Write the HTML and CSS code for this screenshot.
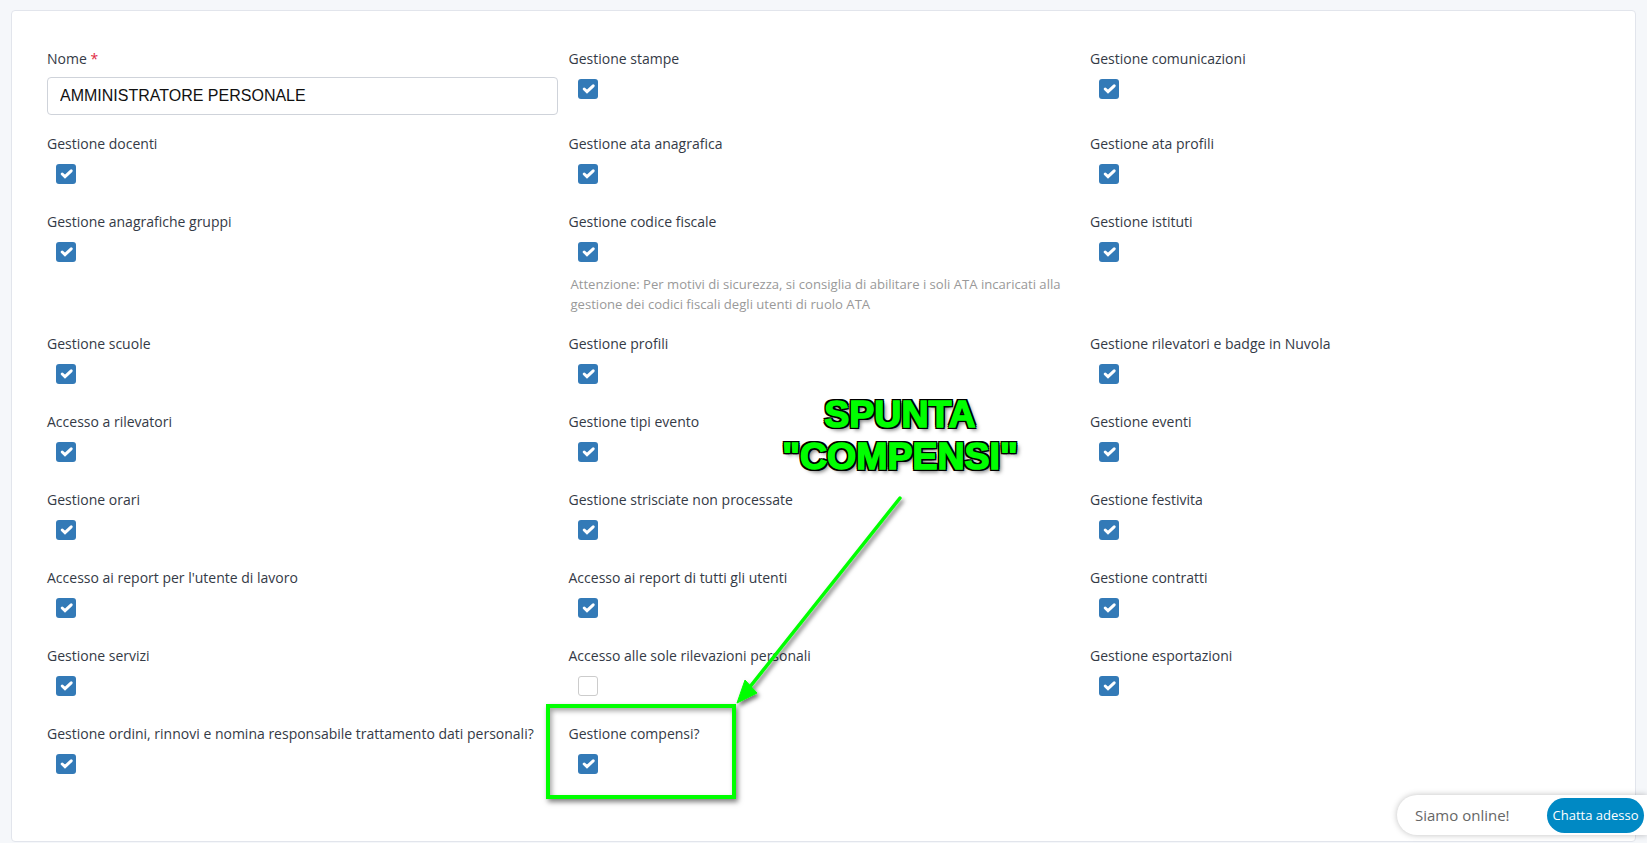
FILE: index.html
```html
<!DOCTYPE html>
<html lang="it">
<head>
  <meta charset="UTF-8" />
  <title>Profilo - Amministratore personale</title>
  <link rel="stylesheet" href="styles.css">
</head>
<body>
  <svg width="0" height="0" class="defs">
    <symbol id="tick" viewBox="0 0 20 20">
      <path d="M6.2 10 9 12.6 15.2 6.8" fill="none" stroke="#fff" stroke-width="3" stroke-linecap="round" />
    </symbol>
  </svg>

  <main class="card">
    <form class="grid">
      <div class="field">
        <label class="label">Nome <span class="req">*</span></label>
        <input class="input" type="text" value="AMMINISTRATORE PERSONALE">
      </div>
      <div class="field"><label class="label">Gestione stampe</label><span class="check on"><svg><use href="#tick"/></svg></span></div>
      <div class="field"><label class="label">Gestione comunicazioni</label><span class="check on"><svg><use href="#tick"/></svg></span></div>

      <div class="field"><label class="label">Gestione docenti</label><span class="check on"><svg><use href="#tick"/></svg></span></div>
      <div class="field"><label class="label">Gestione ata anagrafica</label><span class="check on"><svg><use href="#tick"/></svg></span></div>
      <div class="field"><label class="label">Gestione ata profili</label><span class="check on"><svg><use href="#tick"/></svg></span></div>

      <div class="field"><label class="label">Gestione anagrafiche gruppi</label><span class="check on"><svg><use href="#tick"/></svg></span></div>
      <div class="field">
        <label class="label">Gestione codice fiscale</label><span class="check on"><svg><use href="#tick"/></svg></span>
        <p class="hint">Attenzione: Per motivi di sicurezza, si consiglia di abilitare i soli ATA incaricati alla gestione dei codici fiscali degli utenti di ruolo ATA</p>
      </div>
      <div class="field"><label class="label">Gestione istituti</label><span class="check on"><svg><use href="#tick"/></svg></span></div>

      <div class="field"><label class="label">Gestione scuole</label><span class="check on"><svg><use href="#tick"/></svg></span></div>
      <div class="field"><label class="label">Gestione profili</label><span class="check on"><svg><use href="#tick"/></svg></span></div>
      <div class="field"><label class="label">Gestione rilevatori e badge in Nuvola</label><span class="check on"><svg><use href="#tick"/></svg></span></div>

      <div class="field"><label class="label">Accesso a rilevatori</label><span class="check on"><svg><use href="#tick"/></svg></span></div>
      <div class="field"><label class="label">Gestione tipi evento</label><span class="check on"><svg><use href="#tick"/></svg></span></div>
      <div class="field"><label class="label">Gestione eventi</label><span class="check on"><svg><use href="#tick"/></svg></span></div>

      <div class="field"><label class="label">Gestione orari</label><span class="check on"><svg><use href="#tick"/></svg></span></div>
      <div class="field"><label class="label">Gestione strisciate non processate</label><span class="check on"><svg><use href="#tick"/></svg></span></div>
      <div class="field"><label class="label">Gestione festivita</label><span class="check on"><svg><use href="#tick"/></svg></span></div>

      <div class="field"><label class="label">Accesso ai report per l'utente di lavoro</label><span class="check on"><svg><use href="#tick"/></svg></span></div>
      <div class="field"><label class="label">Accesso ai report di tutti gli utenti</label><span class="check on"><svg><use href="#tick"/></svg></span></div>
      <div class="field"><label class="label">Gestione contratti</label><span class="check on"><svg><use href="#tick"/></svg></span></div>

      <div class="field"><label class="label">Gestione servizi</label><span class="check on"><svg><use href="#tick"/></svg></span></div>
      <div class="field"><label class="label">Accesso alle sole rilevazioni personali</label><span class="check"></span></div>
      <div class="field"><label class="label">Gestione esportazioni</label><span class="check on"><svg><use href="#tick"/></svg></span></div>

      <div class="field"><label class="label">Gestione ordini, rinnovi e nomina responsabile trattamento dati personali?</label><span class="check on"><svg><use href="#tick"/></svg></span></div>
      <div class="field"><label class="label">Gestione compensi?</label><span class="check on"><svg><use href="#tick"/></svg></span></div>
    </form>
  </main>

  <!-- screenshot annotation drawn over the form -->
  <div class="note">SPUNTA<br>"COMPENSI"</div>
  <div class="note-box"></div>
  <svg class="note-arrow" width="1647" height="843" viewBox="0 0 1647 843">
    <defs>
      <filter id="soft" x="-20%" y="-20%" width="140%" height="140%">
        <feDropShadow dx="2" dy="3" stdDeviation="2" flood-color="#000" flood-opacity="0.55" />
      </filter>
    </defs>
    <g filter="url(#soft)">
      <path d="M900 498 749 688" stroke="#00ff00" stroke-width="3.5" stroke-linecap="round" fill="none" />
      <path d="M737 703 745 680 757 693Z" fill="#00ff00" stroke="#00ff00" stroke-width="1" />
    </g>
  </svg>

  <div class="chat">
    <span class="chat-text">Siamo online!</span>
    <button class="chat-btn" type="button">Chatta adesso</button>
  </div>
</body>
</html>
```

FILE: styles.css
```css
html, body {
  margin: 0;
  height: 100%;
}

body {
  background-color: #f5f7fa;
  font-family: "Open Sans", sans-serif;
  font-size: 14px;
  color: #343a46;
  padding: 10px 11px 0;
  box-sizing: border-box;
  overflow: hidden;
}

.defs {
  position: absolute;
}

.card {
  height: 832px;
  box-sizing: border-box;
  background-color: #fff;
  border: 1px solid #e2e5ec;
  border-radius: 4px;
  padding: 37px 34px 0 35px;
}

.grid {
  display: grid;
  grid-template-columns: repeat(3, 1fr);
  column-gap: 10.5px;
  row-gap: 18px;
  align-items: start;
}

.label {
  display: block;
  height: 21px;
  line-height: 21px;
  margin-bottom: 8px;
  white-space: nowrap;
}

.req {
  color: #e0293e;
}

.input {
  display: block;
  width: 100%;
  height: 38px;
  box-sizing: border-box;
  padding: 0 12px;
  border: 1px solid #cfd3da;
  border-radius: 4px;
  background-color: #fff;
  font-family: "Liberation Sans", Arial, sans-serif;
  font-size: 16px;
  color: #111;
}

.check {
  display: block;
  width: 20px;
  height: 20px;
  box-sizing: border-box;
  margin: 10px 0 9px 9px;
  border: 1px solid #ccc;
  border-radius: 3px;
  background-color: #fff;
}

.check.on {
  background-color: #337ab7;
  border: none;
}

.check svg {
  display: block;
  width: 20px;
  height: 20px;
}

.hint {
  margin: 12px 0 1px 2px;
  font-size: 13.1px;
  line-height: 20px;
  color: #999;
}

/* Annotation */
.note {
  position: absolute;
  left: 760px;
  top: 393px;
  width: 280px;
  text-align: center;
  font-family: "Liberation Sans", Arial, sans-serif;
  font-weight: 700;
  font-size: 37.5px;
  line-height: 42px;
  color: #00ff00;
  -webkit-text-stroke: 1.5px #00ff00;
  text-shadow:
    2px 0 0 #000, -2px 0 0 #000, 0 2px 0 #000, 0 -2px 0 #000,
    2px 2px 0 #000, -2px 2px 0 #000, 2px -2px 0 #000, -2px -2px 0 #000,
    3px 3px 4px rgba(0, 0, 0, 0.6);
}

.note-box {
  position: absolute;
  left: 546px;
  top: 704px;
  width: 190px;
  height: 95px;
  box-sizing: border-box;
  border: 4px solid #00ff00;
  box-shadow: 2px 3px 5px rgba(0, 0, 0, 0.5), inset 2px 3px 5px rgba(0, 0, 0, 0.35);
}

.note-arrow {
  position: absolute;
  left: 0;
  top: 0;
  pointer-events: none;
}

/* Chat widget */
.chat {
  position: absolute;
  left: 1397px;
  top: 795px;
  width: 250px;
  height: 40px;
  box-sizing: border-box;
  display: flex;
  align-items: center;
  justify-content: space-between;
  padding: 0 3px 0 18px;
  background-color: #fff;
  border-radius: 20px 0 0 20px;
  box-shadow: 0 0 6px rgba(0, 0, 0, 0.25);
}

.chat-text {
  font-size: 15px;
  color: #666;
}

.chat-btn {
  width: 97px;
  height: 35px;
  padding: 0;
  border: none;
  border-radius: 18px;
  background-color: #0089c4;
  font-family: "Open Sans", sans-serif;
  font-size: 13px;
  color: #fff;
}
```
